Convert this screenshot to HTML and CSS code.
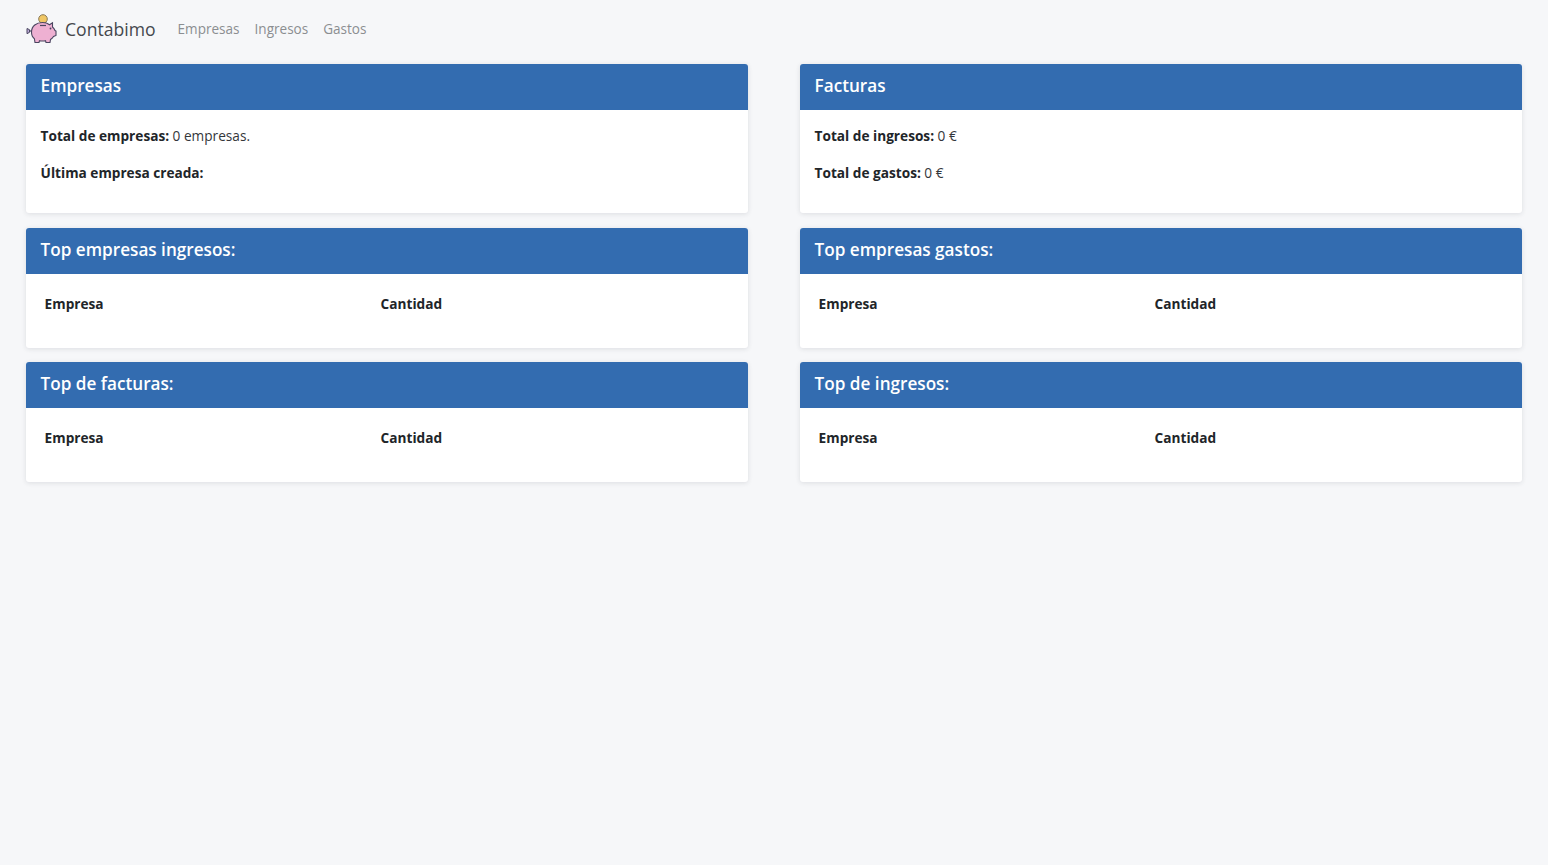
FILE: index.html
```html
<!DOCTYPE html>
<html lang="es">
<head>
<meta charset="utf-8">
<title>Contabimo</title>
<link rel="stylesheet" href="styles.css">
</head>
<body>
<nav class="navbar">
  <a class="brand" href="#">
    <svg class="logo" width="32" height="30" viewBox="0 0 32 30" aria-hidden="true">
      <path d="M1 15.500l2.500 1.200 0 2.600-2.500 1.400z" fill="#b9a9d6" stroke="#4a4560" stroke-width="1"/>
      <path d="M3 18h3" stroke="#4a4560" stroke-width="1.200"/>
      <circle cx="17" cy="6" r="4.300" fill="#f0c765" stroke="#8a7a5a" stroke-width="1"/>
      <path d="M5.500 19c0-6 5-9.500 11-9.500 3.500 0 5.500 1 7 2.200l3-2 0 4.300c1.300 1.200 2 2.300 2.500 3.500l1 .5 0 4.500-2.500 1c-.8 1.300-1.800 2.200-3 3l-.5 3h-4l-.5-1.800c-2 .4-4 .4-6 0l-.5 1.800h-4l-.6-3.800C6.500 24.300 5.500 22 5.500 19z" fill="#eeb0d2" stroke="#4a4560" stroke-width="1.100"/>
      <path d="M14 12.500h6" stroke="#4a4560" stroke-width="1.200"/>
      <circle cx="24.500" cy="15.500" r=".9" fill="#4a4560"/>
    </svg>
    <span>Contabimo</span>
  </a>
  <ul class="nav-links">
    <li><a href="#">Empresas</a></li>
    <li><a href="#">Ingresos</a></li>
    <li><a href="#">Gastos</a></li>
  </ul>
</nav>
<main class="grid">
  <section class="card card-info">
    <h2 class="card-header">Empresas</h2>
    <div class="card-body">
      <p><strong>Total de empresas:</strong> 0 empresas.</p>
      <p><strong>Última empresa creada:</strong></p>
    </div>
  </section>
  <section class="card card-info">
    <h2 class="card-header">Facturas</h2>
    <div class="card-body">
      <p><strong>Total de ingresos:</strong> 0 €</p>
      <p><strong>Total de gastos:</strong> 0 €</p>
    </div>
  </section>
  <section class="card">
    <h2 class="card-header">Top empresas ingresos:</h2>
    <div class="card-body table-body">
      <div class="table-head"><span>Empresa</span><span>Cantidad</span></div>
    </div>
  </section>
  <section class="card">
    <h2 class="card-header">Top empresas gastos:</h2>
    <div class="card-body table-body">
      <div class="table-head"><span>Empresa</span><span>Cantidad</span></div>
    </div>
  </section>
  <section class="card">
    <h2 class="card-header">Top de facturas:</h2>
    <div class="card-body table-body">
      <div class="table-head"><span>Empresa</span><span>Cantidad</span></div>
    </div>
  </section>
  <section class="card">
    <h2 class="card-header">Top de ingresos:</h2>
    <div class="card-body table-body">
      <div class="table-head"><span>Empresa</span><span>Cantidad</span></div>
    </div>
  </section>
</main>
</body>
</html>
```
FILE: styles.css
```css
* { box-sizing: border-box; }
html, body { height: 100%; }
body {
  margin: 0;
  background: #f6f7f9;
  color: #33363a;
  font-family: "Open Sans", "Noto Sans", sans-serif;
  font-size: 13.650px;
  line-height: 21px;
}
a { text-decoration: none; }
.navbar {
  display: flex;
  align-items: center;
  height: 64px;
  padding: 0 26px 6px;
}
.brand {
  display: flex;
  align-items: center;
  gap: 7px;
  color: #45484d;
  font-size: 17.600px;
  margin-right: 22px;
}
.logo { display: block; flex: none; margin-top: -2px; }
.nav-links {
  display: flex;
  gap: 15px;
  list-style: none;
  margin: 0;
  padding: 0;
}
.nav-links a { color: #8b8e91; font-size: 13.550px; }
.grid {
  display: grid;
  grid-template-columns: 722px 722px;
  column-gap: 52px;
  row-gap: 14.700px;
  padding: 0 26px;
  align-items: start;
}
.card {
  background: #fff;
  border-radius: 3px;
  box-shadow: 0 1px 5px rgba(30, 40, 60, .12);
  overflow: hidden;
  height: 119.600px;
}
.card-info { height: 149.300px; }
.card-header {
  margin: 0;
  height: 46px;
  padding: 0 14.600px;
  background: #336cb0;
  color: #fff;
  font-size: 17.150px;
  font-weight: 600;
  line-height: 43px;
}
.card-body { padding: 15px 14.600px; }
.card-body p { margin: 0 0 16px; }
.card-body strong { font-weight: 700; color: #212529; }
.table-body { padding: 19px 18.600px; }
.table-head {
  display: grid;
  grid-template-columns: 336px 1fr;
  font-weight: 700;
  color: #212529;
}
```
